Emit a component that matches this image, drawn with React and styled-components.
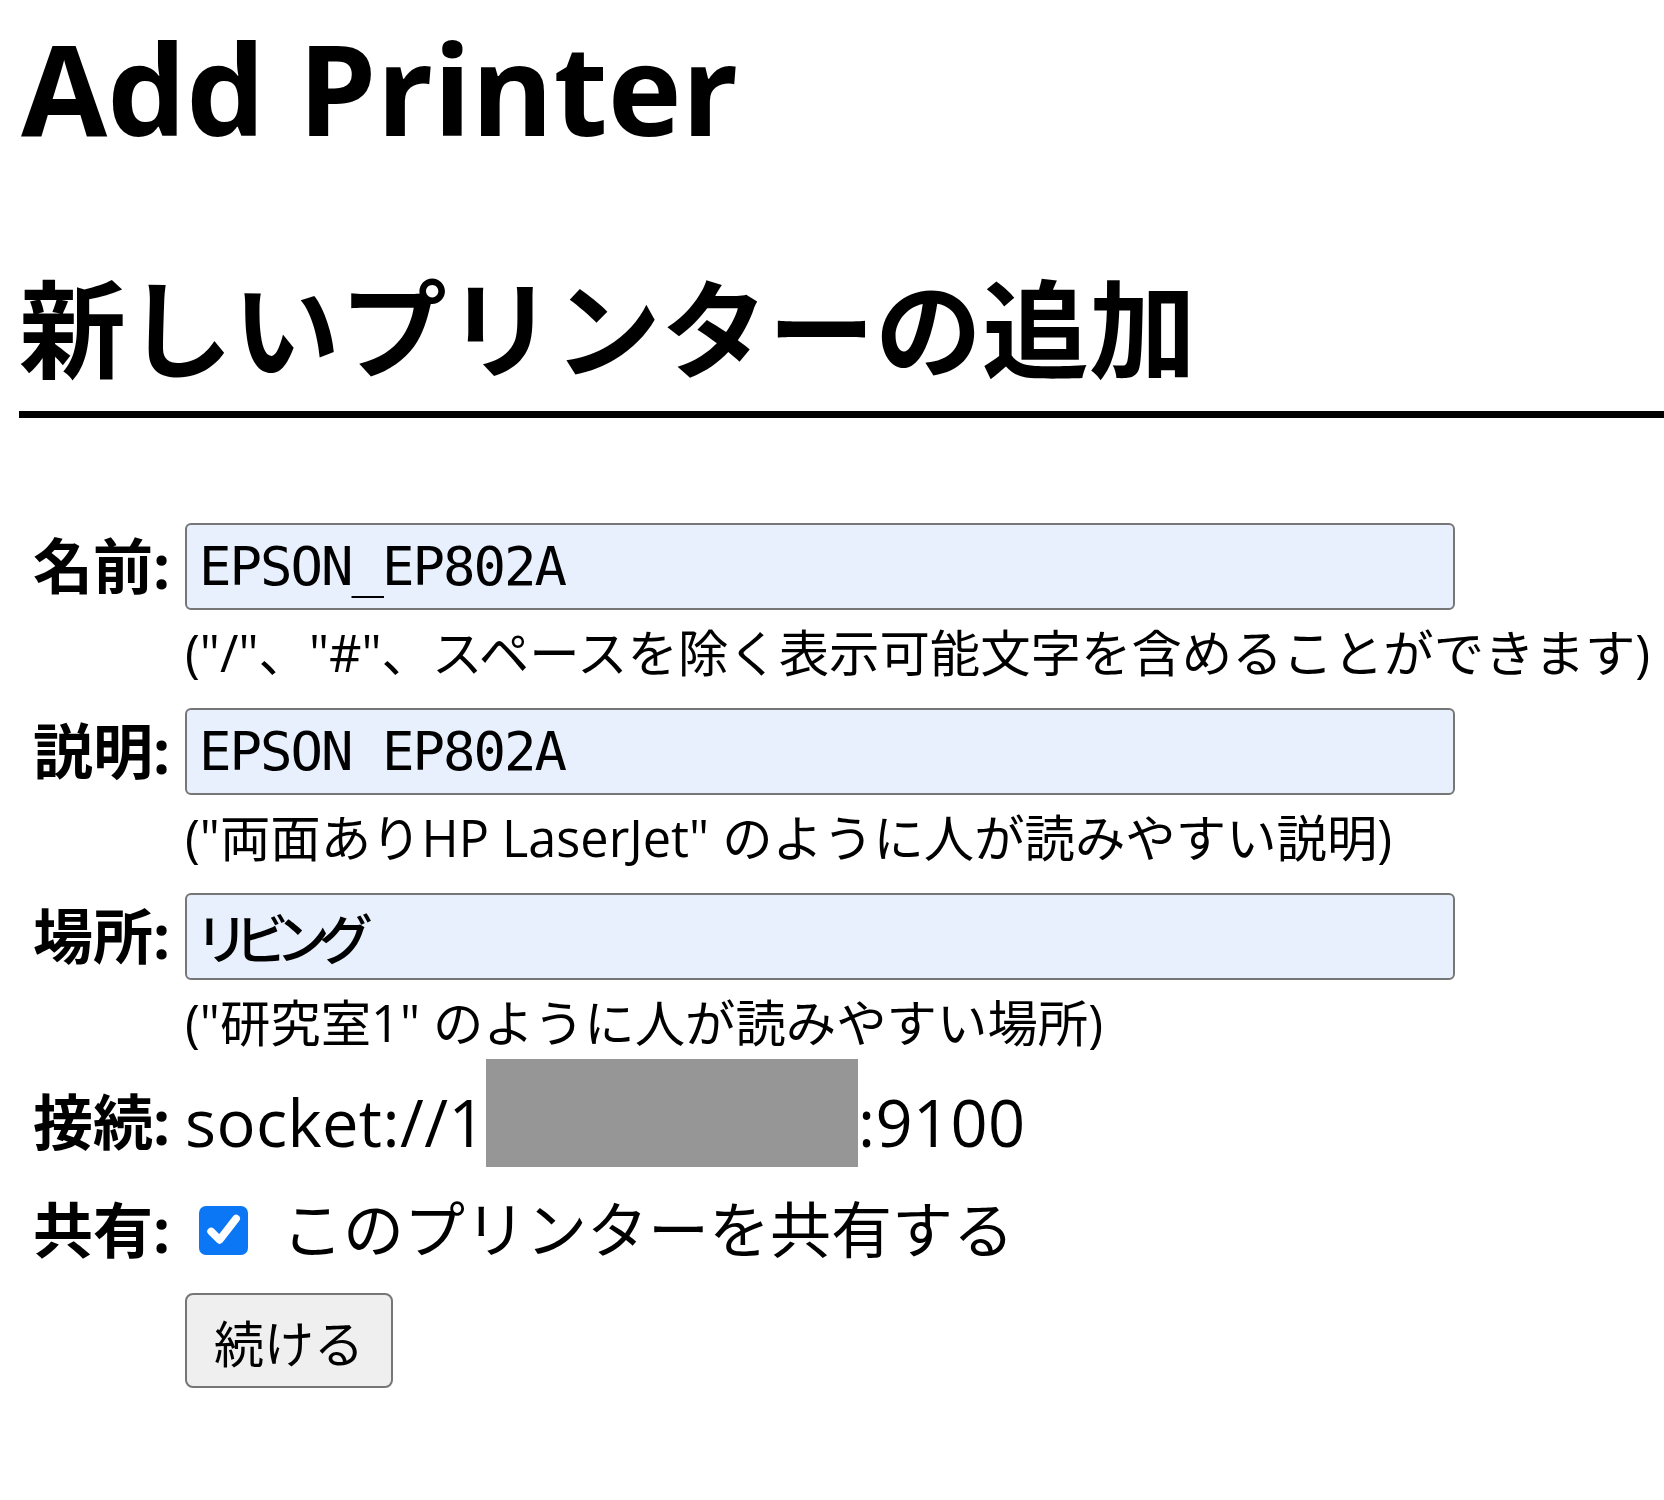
import React from "react";
import styled, { createGlobalStyle } from "styled-components";

const GlobalStyle = createGlobalStyle`
  html, body {
    margin: 0;
    padding: 0;
    background: #ffffff;
  }
  body {
    font-family: "Open Sans", "Noto Sans CJK JP", sans-serif;
    color: #000000;
  }
`;

const Page = styled.div`
  padding-left: 19px;
  padding-bottom: 100px;
`;

const Title = styled.h1`
  margin: 0;
  padding: 2px 0 0 2px;
  font-family: "Open Sans", sans-serif;
  font-size: 125px;
  font-weight: 700;
  line-height: 172px;
  white-space: nowrap;
`;

const Heading = styled.h2`
  margin: 72px 0 0;
  padding-bottom: 10px;
  font-family: "Noto Sans CJK JP", sans-serif;
  font-size: 107px;
  font-weight: 700;
  line-height: 155px;
  border-bottom: 7px solid #000000;
  white-space: nowrap;
`;

const Form = styled.form`
  margin-top: 105px;
  display: grid;
  grid-template-columns: 151px 1fr;
  column-gap: 15px;
  row-gap: 19px;
  align-items: start;
`;

const Label = styled.div`
  font-size: 60px;
  font-weight: 700;
  line-height: ${(p) => p.$h || 87}px;
  text-align: right;
  white-space: nowrap;
`;

const FieldStack = styled.div`
  display: flex;
  flex-direction: column;
  gap: 13px;
  padding-bottom: 6px;
`;

const TextInput = styled.input`
  box-sizing: border-box;
  width: 1270px;
  height: 87px;
  margin: 0;
  padding: 0 12px;
  border: 2px solid #767676;
  border-radius: 6px;
  background: #e8f0fe;
  color: #000000;
  font-family: "DejaVu Sans Mono", "Noto Sans CJK JP", monospace;
  font-size: 54px;
  letter-spacing: ${(p) => (p.$tight ? "-7px" : "-2px")};
  font-weight: ${(p) => (p.$tight ? 500 : 400)};
  font-feature-settings: "palt";
  outline: none;
`;

const Hint = styled.div`
  font-size: 50.4px;
  line-height: 60px;
  white-space: nowrap;
`;

const ValueLine = styled.div`
  font-size: 65px;
  line-height: 88px;
  letter-spacing: 0.4px;
  white-space: nowrap;
`;

const Redact = styled.span`
  display: inline-block;
  width: 372px;
  height: 108px;
  margin-top: -40px;
  background: #969696;
  vertical-align: -20px;
`;

const ShareRow = styled.label`
  display: flex;
  align-items: center;
  gap: 34px;
  height: 88px;
  padding-left: 14px;
`;

const CheckBox = styled.span`
  display: flex;
  align-items: center;
  justify-content: center;
  width: 49px;
  height: 49px;
  border-radius: 7px;
  background: #0b77f5;
`;

const ShareText = styled.span`
  font-size: 61px;
  line-height: 88px;
  white-space: nowrap;
`;

const Spacer = styled.div``;

const Button = styled.button`
  justify-self: start;
  box-sizing: border-box;
  width: 208px;
  height: 95px;
  padding: 0;
  border: 2px solid #767676;
  border-radius: 8px;
  background: #efefef;
  color: #000000;
  font-family: "Noto Sans CJK JP", sans-serif;
  font-size: 50px;
  cursor: pointer;
`;

function Check() {
  return (
    <svg width="44" height="44" viewBox="0 0 24 24" aria-hidden="true">
      <path
        d="M5 12.8 L9.6 17.4 L18.6 5.8"
        fill="none"
        stroke="#ffffff"
        strokeWidth="4.2"
        strokeLinecap="round"
        strokeLinejoin="round"
      />
    </svg>
  );
}

const fields = [
  {
    label: "名前:",
    value: "EPSON_EP802A",
    hint: '("/"、"#"、スペースを除く表示可能文字を含めることができます)',
  },
  {
    label: "説明:",
    value: "EPSON EP802A",
    hint: '("両面ありHP LaserJet" のように人が読みやすい説明)',
  },
  {
    label: "場所:",
    value: "リビング",
    hint: '("研究室1" のように人が読みやすい場所)',
    tight: true,
  },
];

export default function App() {
  return (
    <>
      <GlobalStyle />
      <Page>
        <Title>Add Printer</Title>
        <Heading>新しいプリンターの追加</Heading>
        <Form onSubmit={(e) => e.preventDefault()}>
          {fields.map((f) => (
            <React.Fragment key={f.label}>
              <Label>{f.label}</Label>
              <FieldStack>
                <TextInput defaultValue={f.value} $tight={f.tight} />
                <Hint>{f.hint}</Hint>
              </FieldStack>
            </React.Fragment>
          ))}
          <Label $h={88}>接続:</Label>
          <ValueLine>
            socket://1
            <Redact />
            :9100
          </ValueLine>
          <Label $h={88}>共有:</Label>
          <ShareRow>
            <CheckBox>
              <Check />
            </CheckBox>
            <ShareText>このプリンターを共有する</ShareText>
          </ShareRow>
          <Spacer />
          <Button type="submit">続ける</Button>
        </Form>
      </Page>
    </>
  );
}
